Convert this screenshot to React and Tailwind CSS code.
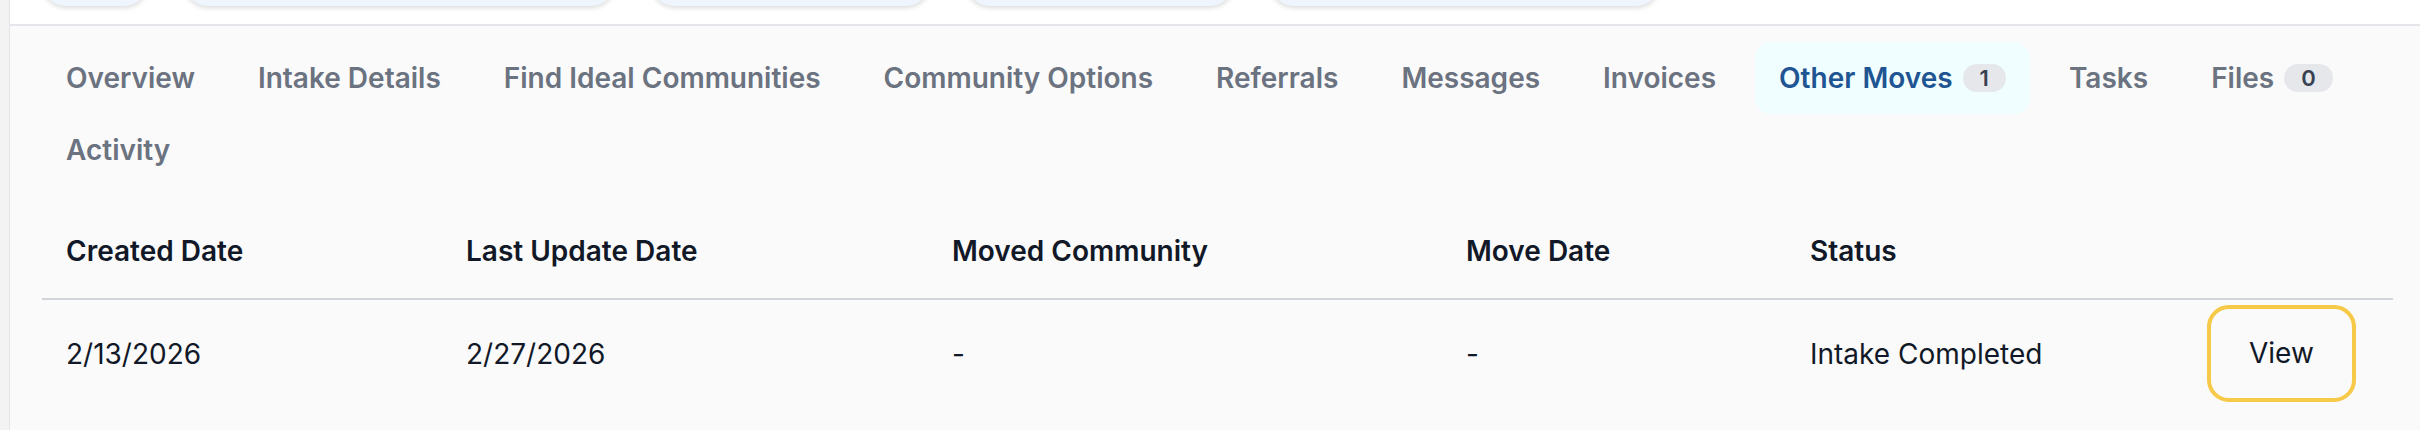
const tabs = [
  { label: 'Overview' },
  { label: 'Intake Details' },
  { label: 'Find Ideal Communities' },
  { label: 'Community Options' },
  { label: 'Referrals' },
  { label: 'Messages' },
  { label: 'Invoices' },
  { label: 'Other Moves', count: 1, active: true },
  { label: 'Tasks' },
  { label: 'Files', count: 0 },
  { label: 'Activity' },
]

const pills = ['w-[106px]', 'w-[431px]', 'w-[279px]', 'w-[268px]', 'w-[390px]']

const moves = [
  {
    created: '2/13/2026',
    updated: '2/27/2026',
    community: '-',
    moveDate: '-',
    status: 'Intake Completed',
  },
]

function Tab({ label, count, active }) {
  return (
    <button
      className={
        active
          ? 'flex items-center rounded-2xl bg-[#f0feff] px-6 py-4 text-[28px] font-semibold leading-[40px] text-[#1f5592]'
          : 'flex items-center rounded-2xl px-6 py-4 text-[28px] font-semibold leading-[40px] text-[#6b7280]'
      }
    >
      {label}
      {count != null && (
        <span className="ml-[10px] rounded-full bg-[#e5e7eb] px-[17px] text-[22px] font-semibold leading-[28px] text-[#374151]">
          {count}
        </span>
      )}
    </button>
  )
}

export default function App() {
  const cols = 'grid grid-cols-[400px_486px_514px_344px_397px_1fr]'

  return (
    <div className="flex min-h-[430px] bg-[#f3f3f3] font-['Inter',sans-serif]">
      <div className="w-[9px] shrink-0" />
      <div className="flex-1 border-l border-[#e4e4e7] bg-[#fafafa]">
        {/* top action pills, cut off by the viewport */}
        <div className="flex h-[26px] items-end gap-[36px] overflow-hidden border-b-2 border-[#e6e5eb] bg-white pb-[18px] pl-[32px]">
          {pills.map((w, i) => (
            <div
              key={i}
              className={`${w} h-[60px] shrink-0 rounded-[24px] bg-[#eef5fd] shadow-[0_2px_5px_rgba(0,0,0,0.14)]`}
            />
          ))}
        </div>

        <div className="pl-[32px] pr-[27px] pt-4">
          <nav className="flex flex-wrap gap-x-[15px]">
            {tabs.map((t) => (
              <Tab key={t.label} {...t} />
            ))}
          </nav>

          <div className="mt-[21px] text-[28px] leading-[40px] text-[#111827]">
            <div className={`${cols} border-b-2 border-[#d1d5db] pb-[27px] pt-6 font-semibold`}>
              <div className="pl-6">Created Date</div>
              <div className="pl-6">Last Update Date</div>
              <div className="pl-6">Moved Community</div>
              <div className="pl-6">Move Date</div>
              <div className="pl-6">Status</div>
              <div />
            </div>
            {moves.map((m, i) => (
              <div key={i} className={`${cols} items-center pt-[5px]`}>
                <div className="pl-6">{m.created}</div>
                <div className="pl-6">{m.updated}</div>
                <div className="pl-6">{m.community}</div>
                <div className="pl-6">{m.moveDate}</div>
                <div className="pl-6">{m.status}</div>
                <div className="pl-6">
                  <button className="rounded-[22px] border-4 border-[#f7c948] px-[38px] py-6 leading-[41px]">
                    View
                  </button>
                </div>
              </div>
            ))}
          </div>
        </div>
      </div>
    </div>
  )
}
